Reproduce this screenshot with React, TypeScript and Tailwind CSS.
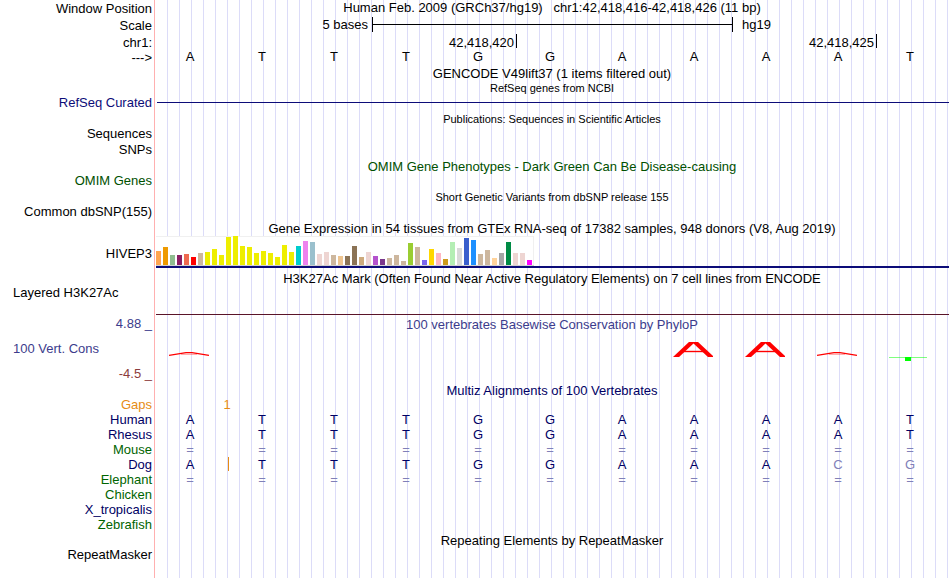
import type { ReactNode } from "react";
import clsx from "clsx";

const bases = ["A", "T", "T", "T", "G", "G", "A", "A", "A", "A", "T"];

// [median expression in px, tissue colour]
const tissues: [number, string][] = [
  [14, "#ffa54f"], [18, "#ee9a00"], [10, "#8fbc8f"], [10, "#8b1c62"], [11, "#ee6a50"], [8, "#ff0000"],
  [12, "#cdb79e"], [13, "#eeee00"], [16, "#eeee00"], [10, "#eeee00"], [28, "#eeee00"], [29, "#eeee00"],
  [19, "#eeee00"], [18, "#eeee00"], [12, "#eeee00"], [14, "#eeee00"], [12, "#eeee00"], [8, "#eeee00"],
  [20, "#eeee00"], [13, "#eeee00"], [19, "#00cdcd"], [24, "#ee82ee"], [23, "#9ac0cd"], [11, "#eed5d2"],
  [13, "#eed5d2"], [10, "#cdb79e"], [9, "#eec591"], [9, "#8b7355"], [19, "#8b7355"], [8, "#cdaa7d"],
  [13, "#eed5d2"], [9, "#b452cd"], [6, "#7a378b"], [7, "#cdb79e"], [10, "#cdb79e"], [4, "#cdb79e"],
  [22, "#9acd32"], [18, "#cdb79e"], [5, "#7a67ee"], [16, "#ffd700"], [12, "#ffb6c1"], [6, "#cd9b1d"],
  [23, "#b4eeb4"], [17, "#d9d9d9"], [27, "#3a5fcd"], [25, "#1e90ff"], [11, "#cdb79e"], [15, "#cdb79e"],
  [7, "#ffd39b"], [12, "#a6a6a6"], [23, "#008b45"], [12, "#eed5d2"], [12, "#eed5d2"], [5, "#ff00ff"],
];

const same = Array(11).fill("=");

const species = [
  { name: "Human", color: "text-[#000064]", seq: bases },
  { name: "Rhesus", color: "text-[#000064]", seq: bases },
  { name: "Mouse", color: "text-[#006400]", seq: same },
  { name: "Dog", color: "text-[#000064]", seq: [...bases.slice(0, 9), "C", "G"], insertAfter: 0 },
  { name: "Elephant", color: "text-[#006400]", seq: same },
  { name: "Chicken", color: "text-[#006400]", seq: [] },
  { name: "X_tropicalis", color: "text-[#000064]", seq: [] },
  { name: "Zebrafish", color: "text-[#006400]", seq: [] },
];

const conservation = ["low", "", "", "", "", "", "", "high", "high", "low", "negative"];

type RowProps = {
  height: string;
  label?: string;
  labelClass?: string;
  children?: ReactNode;
};

function Row({ height, label, labelClass, children }: RowProps) {
  return (
    <div className={clsx("flex", height)}>
      <div className={clsx("w-[155px] shrink-0 pr-[3px] text-right", labelClass)}>{label}</div>
      <div className="min-w-0 flex-1">{children}</div>
    </div>
  );
}

function Title({ small, className, children }: { small?: boolean; className?: string; children: ReactNode }) {
  return (
    <h2 className={clsx("pl-0.5 text-center whitespace-pre", small && "text-[11px]", className)}>{children}</h2>
  );
}

function ConservationMark({ kind }: { kind: string }) {
  return (
    <svg viewBox="0 0 40 33" className="ml-3.5 h-[33px] w-10">
      {kind === "high" && (
        <svg x="0" y="10" width="41" height="15" fill="none" stroke="#ff0000">
          <path d="M-1 18.75 L23 -3.75" strokeWidth="4.2" />
          <path d="M42 18.75 L18 -3.75" strokeWidth="4.2" />
          <path d="M10 9.5 H31" strokeWidth="1.4" />
        </svg>
      )}
      {kind === "low" && (
        <g fill="none" stroke="#ff0000">
          <path d="M0 23.3 L17 20.6 H23 L40 23.3" strokeWidth="1.2" />
          <path d="M12 22.3 H28" strokeWidth="0.4" />
        </g>
      )}
      {kind === "negative" && (
        <g fill="#00ff00">
          <rect x="0" y="25" width="38" height="1" opacity="0.5" />
          <rect x="16" y="25" width="6" height="4" />
        </g>
      )}
    </svg>
  );
}

function Alignment() {
  return (
    <table className="w-full table-fixed border-collapse">
      <colgroup>
        <col className="w-[155px]" />
      </colgroup>
      <tbody>
        <tr className="h-[15px] text-[#e68c14]">
          <th className="p-0 pr-[3px] text-right font-normal">Gaps</th>
          <td colSpan={2} className="p-0 text-center">1</td>
          <td colSpan={9} className="p-0"></td>
        </tr>
        {species.map((s) => (
          <tr key={s.name} className={clsx("h-[15px]", s.color)}>
            <th className="p-0 pr-[3px] text-right font-normal">{s.name}</th>
            {bases.map((base, i) => (
              <td
                key={i}
                className={clsx(
                  "relative p-0 pr-0.5 text-center",
                  s.seq[i] === base ? "text-[#000064]" : "text-[#8080b8]"
                )}
              >
                {s.seq[i]}
                {s.insertAfter === i && <span className="absolute top-0 -right-0.5 h-3.5 w-px bg-[#e68c14]"></span>}
              </td>
            ))}
          </tr>
        ))}
      </tbody>
    </table>
  );
}

export default function App() {
  return (
    <main className="relative min-h-screen bg-white pr-[3px] font-['Liberation_Sans',Arial,sans-serif] text-[13px] leading-[15px] text-black">
      {/* Guide lines behind every track */}
      <div className="absolute inset-y-0 right-0 left-[154px] border-l border-[#ffb0b0] pl-3">
        <div className="h-full bg-[linear-gradient(to_right,#dcdcf8_1px,transparent_1px)] bg-size-[12px_100%]"></div>
      </div>

      <div className="relative">
        <Row height="h-4" label="Window Position" labelClass="pt-px">
          <Title>{"Human Feb. 2009 (GRCh37/hg19)   chr1:42,418,416-42,418,426 (11 bp)"}</Title>
        </Row>
        <Row height="h-[18px]" label="Scale" labelClass="pt-0.5">
          <div className="-mr-px ml-px grid grid-cols-11 pt-px">
            <span className="col-span-3 pr-1 text-right">5 bases</span>
            <div className="col-span-5 -mr-px flex items-center border-x border-black">
              <div className="h-px w-full bg-black"></div>
            </div>
            <span className="col-span-3 pl-2.5">hg19</span>
          </div>
        </Row>
        <Row height="h-4" label="chr1:" labelClass="pt-px">
          <div className="-mr-px ml-px grid grid-cols-11">
            <span className="col-span-5 pt-px pr-0.5 text-right">42,418,420</span>
            <span className="col-span-5 h-3.5 border-l border-black pt-px pr-0.5 text-right">42,418,425</span>
            <span className="h-3.5 border-l border-black"></span>
          </div>
        </Row>
        <Row height="h-4" label="--->">
          <div className="grid grid-cols-11 text-center leading-[13px]">
            {bases.map((base, i) => (
              <span key={i} className="pr-0.5">{base}</span>
            ))}
          </div>
        </Row>

        <Row height="h-[15px]">
          <Title>GENCODE V49lift37 (1 items filtered out)</Title>
        </Row>
        <Row height="h-3.5">
          <Title small>RefSeq genes from NCBI</Title>
        </Row>
        <Row height="h-[17px]" label="RefSeq Curated" labelClass="text-[#0c0c78]">
          <div className="-mr-0.5 ml-0.5 h-2 border-b border-[#0c0c78]"></div>
        </Row>

        <Row height="h-3.5">
          <Title small>Publications: Sequences in Scientific Articles</Title>
        </Row>
        <Row height="h-4" label="Sequences" />
        <Row height="h-4" label="SNPs" />

        <Row height="h-[15px]">
          <Title className="pt-px text-[#005000]">OMIM Gene Phenotypes - Dark Green Can Be Disease-causing</Title>
        </Row>
        <Row height="h-4" label="OMIM Genes" labelClass="text-[#005000]" />

        <Row height="h-[15px]">
          <Title small className="pt-px">Short Genetic Variants from dbSNP release 155</Title>
        </Row>
        <Row height="h-4" label="Common dbSNP(155)" />

        <Row height="h-4">
          <Title className="pt-px">Gene Expression in 54 tissues from GTEx RNA-seq of 17382 samples, 948 donors (V8, Aug 2019)</Title>
        </Row>
        <Row height="h-[34px]" label="HIVEP3" labelClass="pt-2.5">
          <div className="-mr-0.5 ml-px border-b-2 border-[#0c0c78]">
            <div className="flex h-[30px] w-fit items-end gap-0.5 border-b border-[#d0d0d0] bg-white pr-0.5 shadow-[inset_-1px_1px_#f0f0f0]">
              {tissues.map(([height, color], i) => (
                <div key={i} className="w-[5px]" style={{ height, backgroundColor: color }}></div>
              ))}
            </div>
          </div>
        </Row>

        <Row height="h-[15px]">
          <Title className="pt-px">H3K27Ac Mark (Often Found Near Active Regulatory Elements) on 7 cell lines from ENCODE</Title>
        </Row>
        <Row height="h-[31px]" label="Layered H3K27Ac" labelClass="pl-[13px] text-left!">
          <div className="-mr-0.5 ml-px h-[30px] border-b border-[#5a1428]"></div>
        </Row>

        <Row height="h-4" label="4.88 _" labelClass="text-[#3c3c8c]">
          <Title className="pt-px text-[#3c3c8c]">100 vertebrates Basewise Conservation by PhyloP</Title>
        </Row>
        <Row height="h-[33px]" label="100 Vert. Cons" labelClass="pt-[9px] pl-[13px] text-left! text-[#3c3c8c]">
          <div className="grid grid-cols-11">
            {conservation.map((kind, i) => (
              <ConservationMark key={i} kind={kind} />
            ))}
          </div>
        </Row>
        <Row height="h-[17px]" label="-4.5 _" labelClass="pt-px text-[#8c3c3c]" />

        <Row height="h-[15px]">
          <Title className="pt-px text-[#000064]">Multiz Alignments of 100 Vertebrates</Title>
        </Row>
        <Alignment />

        <Row height="h-[15px]">
          <Title className="pt-px">Repeating Elements by RepeatMasker</Title>
        </Row>
        <Row height="h-[31px]" label="RepeatMasker" />
      </div>
    </main>
  );
}
